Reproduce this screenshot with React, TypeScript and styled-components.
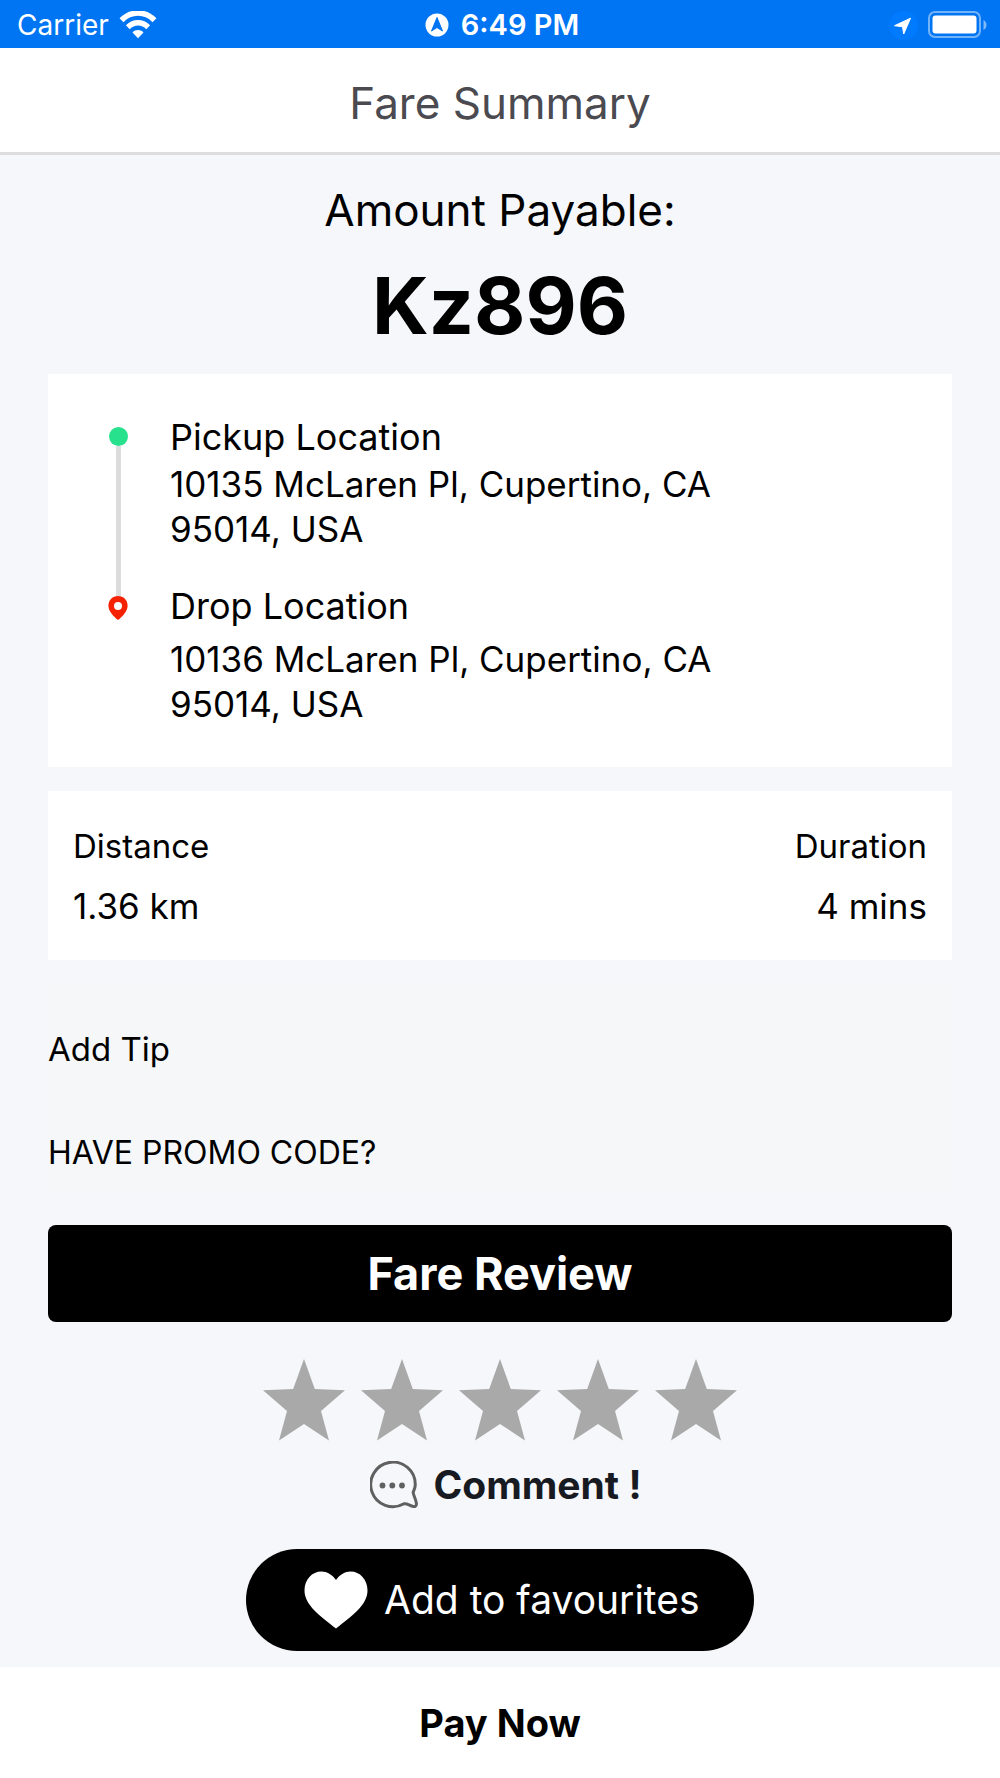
import React, { useState } from "react";
import styled, { createGlobalStyle } from "styled-components";

const GlobalStyle = createGlobalStyle`
  *, *::before, *::after { box-sizing: border-box; }
  body { margin: 0; background: #f6f7fb; }
  body, button, input { font-family: Inter, "Liberation Sans", sans-serif; }
  h1, h2, p, dl, dd, dt, ol, fieldset { margin: 0; padding: 0; }
  button { border: 0; padding: 0; cursor: pointer; background: none; }
`;

const Page = styled.div`
  display: flex;
  flex-direction: column;
  min-height: 100vh;
  color: #000;
`;

const StatusBar = styled.div`
  display: grid;
  grid-template-columns: 1fr auto 1fr;
  align-items: center;
  height: 48px;
  padding: 2px 13px 0 17px;
  background: #0075f3;
  color: #fff;
  font-size: 28px;
  line-height: 34px;
`;

const StatusGroup = styled.div<{ $end?: boolean; $strong?: boolean }>`
  display: flex;
  align-items: center;
  justify-content: ${(p) => (p.$end ? "flex-end" : "flex-start")};
  gap: ${(p) => (p.$strong ? 12 : 10)}px;
  font-size: ${(p) => (p.$strong ? 29 : 28)}px;
  font-weight: ${(p) => (p.$strong ? 600 : 400)};
`;

const Header = styled.header`
  padding: 29px 48px 23px;
  background: #fff;
  border-bottom: 3px solid #dddddf;
  text-align: center;
`;

const Title = styled.h1`
  font-size: 44px;
  line-height: 52px;
  font-weight: 400;
  color: #4a4a50;
`;

const Main = styled.main`
  display: flex;
  flex-direction: column;
  flex: 1;
  padding: 27px 48px 16px;
`;

const Amount = styled.section`
  display: flex;
  flex-direction: column;
  align-items: center;
  padding-bottom: 21px;
`;

const AmountLabel = styled.h2`
  font-size: 44px;
  line-height: 56px;
  font-weight: 400;
`;

const AmountValue = styled.p`
  padding-top: 19px;
  font-size: 79px;
  line-height: 96px;
  font-weight: 700;
`;

const Card = styled.section`
  background: #fff;
`;

const Route = styled.ol`
  list-style: none;
  padding: 41px 60px 40px;
`;

const Stop = styled.li`
  display: flex;
  gap: 42px;
`;

const Marker = styled.div`
  display: flex;
  flex: none;
  flex-direction: column;
  align-items: center;
  width: 20px;
`;

const Lead = styled.span<{ $line?: boolean }>`
  width: 5px;
  height: 12px;
  background: ${(p) => (p.$line ? "#dcdcdc" : "transparent")};
`;

const Dot = styled.span`
  width: 19px;
  height: 19px;
  border-radius: 50%;
  background: #27e18d;
`;

const Line = styled.span`
  flex: 1;
  width: 5px;
  background: #dcdcdc;
`;

const StopText = styled.div<{ $gap: number; $last?: boolean }>`
  display: flex;
  flex-direction: column;
  gap: ${(p) => p.$gap}px;
  max-width: 580px;
  padding-bottom: ${(p) => (p.$last ? 0 : 32)}px;
  line-height: 45px;
`;

const StopLabel = styled.p`
  font-size: 36px;
`;

const StopAddress = styled.p`
  font-size: 35px;
`;

const Stats = styled.dl`
  display: flex;
  justify-content: space-between;
  margin-top: 24px;
  padding: 33px 25px 32px;
  background: #fff;
`;

const Stat = styled.div<{ $end?: boolean }>`
  display: flex;
  flex-direction: column;
  gap: 16px;
  text-align: ${(p) => (p.$end ? "right" : "left")};
`;

const StatLabel = styled.dt`
  font-size: 33px;
  line-height: 44px;
`;

const StatValue = styled.dd`
  font-size: 35px;
  line-height: 44px;
`;

const Extras = styled.section`
  display: flex;
  flex-direction: column;
  align-items: flex-start;
  gap: 60px;
  margin-top: 22px;
  padding: 45px 0 18px;
  background: #f6f7f9;
`;

const TextButton = styled.button<{ $size: number }>`
  font-size: ${(p) => p.$size}px;
  line-height: 44px;
  color: #000;
`;

const ReviewButton = styled.button`
  height: 97px;
  margin-top: 32px;
  border-radius: 8px;
  background: #000;
  color: #fff;
  font-size: 45px;
  font-weight: 700;
`;

const Rating = styled.fieldset`
  display: flex;
  justify-content: center;
  gap: 16px;
  margin-top: 37px;
  border: 0;
`;

const StarLabel = styled.label`
  position: relative;
  display: flex;
  cursor: pointer;
`;

const StarInput = styled.input`
  position: absolute;
  inset: 0;
  width: 100%;
  height: 100%;
  margin: 0;
  opacity: 0;
  cursor: pointer;
`;

const CommentButton = styled.button`
  display: flex;
  align-items: center;
  align-self: center;
  gap: 15px;
  margin-top: 19px;
  padding-left: 12px;
  color: #181a22;
  font-size: 39px;
  line-height: 50px;
  font-weight: 700;
`;

const FavouriteButton = styled.button`
  display: flex;
  align-items: center;
  align-self: center;
  gap: 16px;
  min-width: 508px;
  height: 102px;
  margin-top: 39px;
  padding: 0 48px 0 58px;
  border-radius: 51px;
  background: #000;
  color: #fff;
  font-size: 39px;
  line-height: 50px;
`;

const Footer = styled.footer`
  display: flex;
  background: #fff;
`;

const PayButton = styled.button`
  flex: 1;
  height: 111px;
  font-size: 38px;
  font-weight: 700;
  color: #000;
`;

const WifiIcon = () => (
  <svg width="38" height="28" viewBox="0 0 38 28" fill="none" aria-hidden="true">
    <path d="M2.500 9.200C12-.4 26-.4 35.500 9.200" stroke="#fff" strokeWidth="5.500" />
    <path d="M8.800 16.200C14.700 10.400 23.300 10.400 29.200 16.200" stroke="#fff" strokeWidth="5.500" />
    <path d="M13.500 21.500C16.500 18.300 21.500 18.300 24.500 21.500L19 27.200Z" fill="#fff" />
  </svg>
);

const CompassIcon = () => (
  <svg width="24" height="24" viewBox="0 0 24 24" aria-hidden="true">
    <circle cx="12" cy="12" r="11.500" fill="#fff" />
    <path d="M12 4.500 17.500 18 12 14.500 6.500 18Z" fill="#0075f3" stroke="#0075f3" strokeLinejoin="round" />
  </svg>
);

const LocationIcon = () => (
  <svg width="29" height="29" viewBox="0 0 29 29" aria-hidden="true">
    <circle cx="14.500" cy="14.500" r="14.500" fill="#007aff" />
    <path d="M21.500 7.200 14.700 23 13.500 15.700 5.500 14.700Z" fill="#fff" stroke="#fff" strokeLinejoin="round" />
  </svg>
);

const BatteryIcon = () => (
  <svg width="59" height="28" viewBox="0 0 59 28" aria-hidden="true">
    <rect x="1" y="1" width="51" height="25" rx="6" fill="none" stroke="#fff" strokeOpacity=".45" strokeWidth="2" />
    <rect x="4.500" y="4.500" width="44" height="18" rx="3" fill="#fff" />
    <path d="M55.500 9C59.500 11 59.500 17 55.500 19Z" fill="#fff" fillOpacity=".5" />
  </svg>
);

const PinIcon = () => (
  <svg width="20" height="24" viewBox="0 0 20 24" aria-hidden="true">
    <path
      fill="#f42200"
      d="M10 0C4.500 0 .4 4.200.4 9.700.4 15 5.500 20.500 10 24c4.500-3.500 9.600-9 9.600-14.300C19.600 4.200 15.500 0 10 0Z"
    />
    <circle cx="10" cy="10" r="4" fill="#fff" />
  </svg>
);

const StarIcon = ({ active }: { active: boolean }) => (
  <svg width="82" height="82" viewBox="0 0 82 82" aria-hidden="true">
    <path
      fill={active ? "#f5b400" : "#a9a9a9"}
      d="M41 0 51.800 30 82 31.300 58 52 66 81.500 41 65 16 81.500 24 52 0 31.300 30.200 30Z"
    />
  </svg>
);

const CommentIcon = () => (
  <svg width="48" height="48" viewBox="0 0 48 48" aria-hidden="true">
    <path
      fill="none"
      stroke="#606060"
      strokeWidth="3"
      strokeLinejoin="round"
      d="M43.200 31C42.600 33 46 38 46.400 42.500 46.600 45.500 45 46 42.500 45.300 39 44.300 36.500 42 34 42.800A22.300 22.300 0 1 1 45.300 23.500C45.300 27 44 29 43.200 31Z"
    />
    <circle cx="12.500" cy="24.500" r="2.900" fill="#606060" />
    <circle cx="22.300" cy="24.500" r="2.900" fill="#606060" />
    <circle cx="32" cy="24.500" r="2.900" fill="#606060" />
  </svg>
);

const HeartIcon = () => (
  <svg width="64" height="58" viewBox="0 0 64 58" aria-hidden="true">
    <path
      fill="#fff"
      d="M32 9C28 3.500 23 .5 17.500.5 8 .5.500 8.500.500 19.500.500 34 16 45 32 57.500 48 45 63.500 34 63.500 19.500 63.500 8.500 56 .5 46.500.5 41 .5 36 3.500 32 9Z"
    />
  </svg>
);

export default function App() {
  const [rating, setRating] = useState(0);

  return (
    <Page>
      <GlobalStyle />
      <StatusBar>
        <StatusGroup>
          Carrier <WifiIcon />
        </StatusGroup>
        <StatusGroup $strong>
          <CompassIcon /> 6:49 PM
        </StatusGroup>
        <StatusGroup $end>
          <LocationIcon />
          <BatteryIcon />
        </StatusGroup>
      </StatusBar>
      <Header>
        <Title>Fare Summary</Title>
      </Header>
      <Main>
        <Amount>
          <AmountLabel>Amount Payable:</AmountLabel>
          <AmountValue>Kz896</AmountValue>
        </Amount>
        <Card>
          <Route>
            <Stop>
              <Marker>
                <Lead />
                <Dot />
                <Line />
              </Marker>
              <StopText $gap={2}>
                <StopLabel>Pickup Location</StopLabel>
                <StopAddress>10135 McLaren Pl, Cupertino, CA 95014, USA</StopAddress>
              </StopText>
            </Stop>
            <Stop>
              <Marker>
                <Lead $line />
                <PinIcon />
              </Marker>
              <StopText $gap={8} $last>
                <StopLabel>Drop Location</StopLabel>
                <StopAddress>10136 McLaren Pl, Cupertino, CA 95014, USA</StopAddress>
              </StopText>
            </Stop>
          </Route>
        </Card>
        <Stats>
          <Stat>
            <StatLabel>Distance</StatLabel>
            <StatValue>1.36 km</StatValue>
          </Stat>
          <Stat $end>
            <StatLabel>Duration</StatLabel>
            <StatValue>4 mins</StatValue>
          </Stat>
        </Stats>
        <Extras>
          <TextButton type="button" $size={33}>Add Tip</TextButton>
          <TextButton type="button" $size={32}>HAVE PROMO CODE?</TextButton>
        </Extras>
        <ReviewButton type="button">Fare Review</ReviewButton>
        <Rating aria-label="Rating">
          {[1, 2, 3, 4, 5].map((n) => (
            <StarLabel key={n}>
              <StarInput
                type="radio"
                name="rating"
                value={n}
                aria-label={`${n} of 5`}
                checked={rating === n}
                onChange={() => setRating(n)}
              />
              <StarIcon active={n <= rating} />
            </StarLabel>
          ))}
        </Rating>
        <CommentButton type="button">
          <CommentIcon />
          Comment !
        </CommentButton>
        <FavouriteButton type="button">
          <HeartIcon />
          Add to favourites
        </FavouriteButton>
      </Main>
      <Footer>
        <PayButton type="button">Pay Now</PayButton>
      </Footer>
    </Page>
  );
}
